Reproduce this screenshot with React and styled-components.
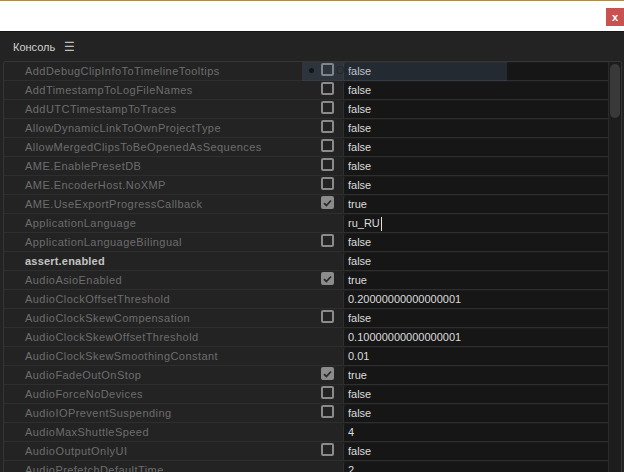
import React from "react";
import styled, { createGlobalStyle } from "styled-components";

const Global = createGlobalStyle`
  html, body {
    margin: 0;
    padding: 0;
    background: #ffffff;
    font-family: "Liberation Sans", "Noto Sans", Arial, sans-serif;
    overflow: hidden;
  }
`;

// 上の白い帯
const TopStrip = styled.div`
  height: 30px;
  border-top: 1px solid #a68d58;
  background: #ffffff;
  display: flex;
  justify-content: flex-end;
  align-items: flex-start;
`;

const CloseButton = styled.div`
  width: 18px;
  height: 18px;
  margin-top: 7px;
  background: #c9514f;
  color: #ffffff;
  font-size: 11px;
  font-weight: bold;
  display: flex;
  align-items: center;
  justify-content: center;
  line-height: 1;
`;

const Panel = styled.div`
  height: 441px;
  background: #232323;
  border-top: 1px solid #161616;
  display: flex;
  flex-direction: column;
  overflow: hidden;
`;

const PanelHeader = styled.div`
  height: 29px;
  padding-left: 13px;
  display: flex;
  align-items: center;
  gap: 9px;
  color: #d2d2d2;
  font-size: 11px;
`;

const MenuIcon = styled.span`
  color: #bdbdbd;
  font-size: 12px;
`;

const Table = styled.div`
  position: relative;
  margin: 0 2px 0 3px;
  border: 1px solid #353535;
  border-bottom: none;
  border-radius: 3px 3px 0 0;
  display: flex;
  flex: 1;
  overflow: hidden;
`;

const Rows = styled.div`
  flex: 1;
`;

const Row = styled.div`
  display: grid;
  grid-template-columns: 314px 25px 1fr;
  height: 19px;
  border-bottom: 1px solid #2e2e2e;
  box-sizing: border-box;
`;

const Label = styled.div`
  padding-left: 21px;
  font-size: 11px;
  line-height: 18px;
  letter-spacing: ${(p) => (p.bold ? "0.2px" : "0.45px")};
  color: ${(p) => (p.bold ? "#c4c4c4" : "#6d6d6d")};
  font-weight: ${(p) => (p.bold ? "bold" : "normal")};
  white-space: nowrap;
  overflow: hidden;
`;

const CheckCell = styled.div`
  display: flex;
  align-items: flex-start;
  padding-top: 1px;
  padding-left: 3px;
`;

const Box = styled.div`
  width: 13px;
  height: 13px;
  box-sizing: border-box;
  border: 2px solid #8b8b8b;
  background: ${(p) => (p.checked ? "#8c8c8c" : "transparent")};
  border-radius: 2px;
  display: flex;
  align-items: center;
  justify-content: center;
`;

const Value = styled.div`
  background: #161616;
  border-left: 1px solid #2f2f2f;
  border-top: 1px solid #1c1c1c;
  border-radius: 3px 0 0 0;
  padding-left: 4px;
  font-size: 11px;
  line-height: 17px;
  color: #dcdcdc;
  white-space: nowrap;
  display: flex;
  align-items: center;
`;

const Caret = styled.span`
  display: inline-block;
  width: 1px;
  height: 14px;
  background: #e0e0e0;
  margin-left: 1px;
`;

const Scrollbar = styled.div`
  width: 13px;
  background: #1d1d1d;
  border-left: 1px solid #2a2a2a;
  padding: 2px 1px;
  box-sizing: border-box;
`;

const Thumb = styled.div`
  height: 54px;
  background: #393939;
  border-radius: 5px;
`;

// 消えかけのツールチップ
const Tooltip = styled.div`
  position: absolute;
  left: 298px;
  top: -3px;
  width: 205px;
  height: 22px;
  background: rgba(85, 115, 145, 0.22);
  display: flex;
  align-items: center;
  padding-left: 7px;
  box-sizing: border-box;
  gap: 22px;
  pointer-events: none;
`;

const Dot = styled.span`
  width: 5px;
  height: 5px;
  border-radius: 50%;
  background: #141414;
`;

const Faint = styled.span`
  font-size: 11px;
  color: rgba(30, 30, 30, 0.6);
`;

const rows = [
  ["AddDebugClipInfoToTimelineTooltips", "box", "false"],
  ["AddTimestampToLogFileNames", "box", "false"],
  ["AddUTCTimestampToTraces", "box", "false"],
  ["AllowDynamicLinkToOwnProjectType", "box", "false"],
  ["AllowMergedClipsToBeOpenedAsSequences", "box", "false"],
  ["AME.EnablePresetDB", "box", "false"],
  ["AME.EncoderHost.NoXMP", "box", "false"],
  ["AME.UseExportProgressCallback", "checked", "true"],
  ["ApplicationLanguage", null, "ru_RU", "caret"],
  ["ApplicationLanguageBilingual", "box", "false"],
  ["assert.enabled", null, "false", "bold"],
  ["AudioAsioEnabled", "checked", "true"],
  ["AudioClockOffsetThreshold", null, "0.20000000000000001"],
  ["AudioClockSkewCompensation", "box", "false"],
  ["AudioClockSkewOffsetThreshold", null, "0.10000000000000001"],
  ["AudioClockSkewSmoothingConstant", null, "0.01"],
  ["AudioFadeOutOnStop", "checked", "true"],
  ["AudioForceNoDevices", "box", "false"],
  ["AudioIOPreventSuspending", "box", "false"],
  ["AudioMaxShuttleSpeed", null, "4"],
  ["AudioOutputOnlyUI", "box", "false"],
  ["AudioPrefetchDefaultTime", null, "2"],
];

const Tick = () => (
  <svg width="9" height="8" viewBox="0 0 9 8">
    <path d="M1 4.2 L3.4 6.5 L8 1.5" fill="none" stroke="#2a2a2a" strokeWidth="1.8" />
  </svg>
);

export default function App() {
  return (
    <>
      <Global />
      <TopStrip>
        <CloseButton>x</CloseButton>
      </TopStrip>
      <Panel>
        <PanelHeader>
          Консоль <MenuIcon>☰</MenuIcon>
        </PanelHeader>
        <Table>
          <Rows>
            {rows.map(([name, cb, val, flag]) => (
              <Row key={name}>
                <Label bold={flag === "bold"}>{name}</Label>
                <CheckCell>
                  {cb && <Box checked={cb === "checked"}>{cb === "checked" && <Tick />}</Box>}
                </CheckCell>
                <Value>
                  {val}
                  {flag === "caret" && <Caret />}
                </Value>
              </Row>
            ))}
          </Rows>
          <Scrollbar>
            <Thumb />
          </Scrollbar>
          <Tooltip>
            <Dot />
            <Faint>Ok</Faint>
          </Tooltip>
        </Table>
      </Panel>
    </>
  );
}
